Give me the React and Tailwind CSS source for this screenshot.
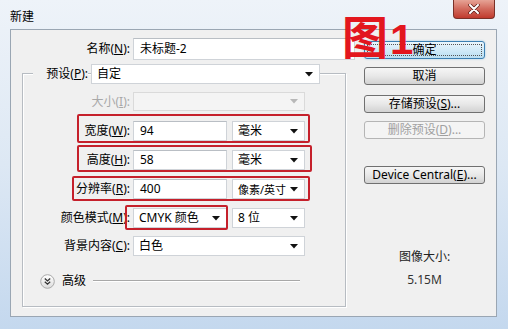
const font = { fontFamily: '"Noto Sans", "Noto Sans CJK SC", sans-serif' };

function Arrow({ disabled }) {
  return (
    <svg width="8" height="5" viewBox="0 0 8 5" className="shrink-0">
      <path d="M0 0 L8 0 L4 4.5 Z" fill={disabled ? "#b8b8b8" : "#111"} />
    </svg>
  );
}

function Select({ w, h = 20, children, disabled, small }) {
  return (
    <div
      className={`flex items-center justify-between pl-[5px] pr-[6px] border ${
        disabled ? "bg-[#f4f4f4] border-[#dadada]" : "bg-white border-[#cfd3d8]"
      }`}
      style={{ width: w, height: h }}
    >
      <span className={`${small ? "text-[11px]" : "text-[12px]"} leading-none text-black whitespace-nowrap`}>{children}</span>
      <Arrow disabled={disabled} />
    </div>
  );
}

function Field({ w, h = 20, children }) {
  return (
    <div
      className="flex items-center pl-[6px] bg-white border border-[#cfd3d8] border-t-[#b9bec4]"
      style={{ width: w, height: h }}
    >
      <span className="text-[12px] leading-none text-black whitespace-nowrap">{children}</span>
    </div>
  );
}

function Label({ w, text, k, rest = "):", dim }) {
  return (
    <div
      className={`text-right text-[12px] leading-none shrink-0 whitespace-nowrap ${dim ? "text-[#a8a8a8]" : "text-black"}`}
      style={{ width: w }}
    >
      {text}(<span className="underline">{k}</span>{rest}
    </div>
  );
}

function Button({ children, disabled, def }) {
  if (def) {
    return (
      <div className="w-[121px] h-[18px] rounded-[3px] border border-[#3c7fb1] bg-linear-to-b from-[#eaf6fd] to-[#b9def2] p-[2px] shadow-[0_0_2px_#8fc6e8]">
        <div className="h-full border border-dotted border-[#555] flex items-center justify-center text-[12px] leading-none text-black">
          {children}
        </div>
      </div>
    );
  }
  return (
    <div
      className={`w-[121px] h-[18px] rounded-[3px] border flex items-center justify-center text-[12px] leading-none whitespace-nowrap ${
        disabled
          ? "border-[#b5b5b5] bg-[#f4f4f4] text-[#a0a0a0]"
          : "border-[#707070] bg-linear-to-b from-[#f6f6f6] via-[#e8e8e8] to-[#d2d2d2] text-black"
      }`}
    >
      {children}
    </div>
  );
}

function RedBox({ left, top, w, h }) {
  return (
    <div
      className="absolute border-2 border-[#c5202b] rounded-[2px] pointer-events-none"
      style={{ left, top, width: w, height: h }}
    />
  );
}

export default function App() {
  return (
    <div
      className="relative w-[508px] h-[329px] bg-linear-to-b from-[#eef3f9] via-[#dde8f4] to-[#c4d8ee] overflow-hidden"
      style={font}
    >
      {/* title bar */}
      <div className="h-[29px] flex justify-between">
        <div className="pl-[10px] pt-[11px] text-[12px] leading-none text-black">新建</div>
        <div className="mr-[13px] w-[42px] h-[19px] rounded-b-[4px] border border-t-0 border-[#7a3128] bg-linear-to-b from-[#e6a396] via-[#d1695c] to-[#c0392d] flex items-center justify-center">
          <svg width="12" height="10" viewBox="0 0 12 10">
            <path d="M2 1 L10 9 M10 1 L2 9" stroke="#5a1a14" strokeWidth="3.4" strokeLinecap="round" />
            <path d="M2 1 L10 9 M10 1 L2 9" stroke="#fff" strokeWidth="2" strokeLinecap="round" />
          </svg>
        </div>
      </div>

      {/* dialog body */}
      <div className="ml-[10px] w-[487px] h-[288px] bg-[#f0f0f0] border border-[#9aa6b3] flex">
        {/* left column */}
        <div className="w-[353px] shrink-0">
          <div className="mt-[8px] flex items-center h-[22px]">
            <Label w={119} text="名称" k="N" />
            <div className="ml-[3px]">
              <Field w={222} h={22}>未标题-2</Field>
            </div>
          </div>

          {/* group box */}
          <div className="mt-[13px] ml-[11px] w-[324px] h-[234px] border border-[#b7bcc2] shadow-[inset_1px_1px_0_#fff,1px_1px_0_#fff]">
            <div className="-mt-[10px] flex items-center h-[20px]">
              <div className="ml-[10px] w-[55px] h-full flex items-center justify-end bg-[#f0f0f0]">
                <Label w={55} text="预设" k="P" />
              </div>
              <div className="ml-[3px]">
                <Select w={229}>自定</Select>
              </div>
            </div>

            <div className="mt-[8px] flex items-center h-[19px]">
              <Label w={107} text="大小" k="I" dim />
              <div className="ml-[3px]">
                <Select w={172} h={19} disabled />
              </div>
            </div>

            <div className="relative mt-[10px] flex items-center h-[20px]">
              <Label w={107} text="宽度" k="W" />
              <div className="ml-[3px]"><Field w={94}>94</Field></div>
              <div className="ml-[5px]"><Select w={73}>毫米</Select></div>
              <RedBox left={54} top={-7} w={233} h={29} />
            </div>

            <div className="relative mt-[9px] flex items-center h-[20px]">
              <Label w={107} text="高度" k="H" />
              <div className="ml-[3px]"><Field w={94}>58</Field></div>
              <div className="ml-[5px]"><Select w={73}>毫米</Select></div>
              <RedBox left={54} top={-5} w={235} h={27} />
            </div>

            <div className="relative mt-[9px] flex items-center h-[20px]">
              <Label w={107} text="分辨率" k="R" />
              <div className="ml-[3px]"><Field w={94}>400</Field></div>
              <div className="ml-[5px]"><Select w={73} small>像素/英寸</Select></div>
              <RedBox left={49} top={-3} w={238} h={25} />
            </div>

            <div className="relative mt-[9px] flex items-center h-[20px]">
              <Label w={107} text="颜色模式" k="M" />
              <div className="ml-[3px]"><Select w={94}>CMYK 颜色</Select></div>
              <div className="ml-[5px]"><Select w={73}>8 位</Select></div>
              <RedBox left={102} top={-3} w={103} h={25} />
            </div>

            <div className="mt-[8px] flex items-center h-[20px]">
              <Label w={107} text="背景内容" k="C" />
              <div className="ml-[3px]"><Select w={172}>白色</Select></div>
            </div>

            <div className="mt-[17px] flex items-center h-[16px]">
              <svg width="15" height="15" viewBox="0 0 15 15" className="ml-[17px] shrink-0">
                <defs>
                  <linearGradient id="cg" x1="0" y1="0" x2="0" y2="1">
                    <stop offset="0" stopColor="#ffffff" />
                    <stop offset="1" stopColor="#dcdcdc" />
                  </linearGradient>
                </defs>
                <circle cx="7.5" cy="7.5" r="6.8" fill="url(#cg)" stroke="#a9a9a9" />
                <path d="M4.8 4.6 L7.5 7 L10.2 4.6 M4.8 7.8 L7.5 10.2 L10.2 7.8" fill="none" stroke="#333" strokeWidth="1.3" />
              </svg>
              <span className="ml-[7px] text-[12px] leading-none text-black">高级</span>
              <div className="ml-[7px] w-[207px] h-[2px] border-t border-[#a8a8a8] border-b border-b-white" />
            </div>
          </div>
        </div>

        {/* right column */}
        <div className="w-[121px] shrink-0 flex flex-col">
          <div className="mt-[11px]"><Button def>确定</Button></div>
          <div className="mt-[8px]"><Button>取消</Button></div>
          <div className="mt-[10px]">
            <Button>存储预设(<span className="underline">S</span>)...</Button>
          </div>
          <div className="mt-[8px]">
            <Button disabled>删除预设(<span className="underline">D</span>)...</Button>
          </div>
          <div className="mt-[27px]">
            <Button>Device Central(<span className="underline">E</span>)...</Button>
          </div>
          <div className="mt-[65px] text-center text-[12px] leading-[16px] text-[#222]">图像大小:</div>
          <div className="mt-[7px] text-center text-[12px] leading-[16px] text-[#333]">5.15M</div>
        </div>
      </div>

      {/* annotation */}
      <div className="absolute left-[342px] top-[7px] flex items-baseline text-[#e3161e] font-bold leading-[1.2]">
        <span className="text-[46px]" style={{ fontFamily: '"Noto Sans CJK SC", sans-serif' }}>图</span>
        <span className="text-[42px] ml-[2px]" style={{ fontFamily: '"Liberation Sans", sans-serif' }}>1</span>
      </div>
    </div>
  );
}
